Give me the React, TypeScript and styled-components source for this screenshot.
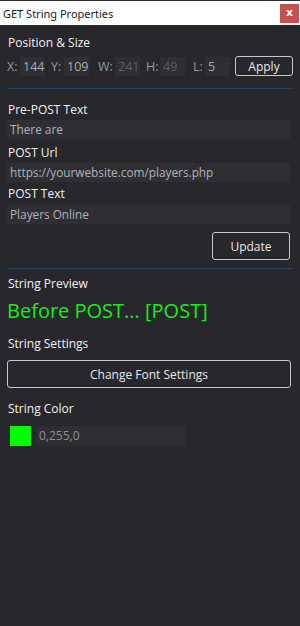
import React from 'react'
import styled, { createGlobalStyle } from 'styled-components'

const Global = createGlobalStyle`
  html, body {
    margin: 0;
    padding: 0;
    background: #27272c;
  }
  body {
    font-family: 'Open Sans', 'Noto Sans', sans-serif;
  }
`

// label width / gap after the input, so the boxes land where the original has them
const coords = [
  { label: 'X:', value: '144', dim: false, lw: 13, gap: 6 },
  { label: 'Y:', value: '109', dim: false, lw: 13, gap: 9 },
  { label: 'W:', value: '241', dim: true, lw: 17, gap: 6 },
  { label: 'H:', value: '49', dim: true, lw: 14, gap: 8 },
  { label: 'L:', value: '5', dim: false, lw: 12, gap: 5 },
]

const App = () => {
  return (
    <Window>
      <Global />
      <TitleBar>
        <Title>GET String Properties</Title>
        <Close>x</Close>
      </TitleBar>
      <Body>
        <Label $top={8}>Position &amp; Size</Label>
        <CoordRow>
          {coords.map((c) => (
            <Coord key={c.label} $gap={c.gap}>
              <CoordLabel $w={c.lw}>{c.label}</CoordLabel>
              <CoordInput $dim={c.dim}>{c.value}</CoordInput>
            </Coord>
          ))}
          <Button $w="58px" $h="20px">Apply</Button>
        </CoordRow>
        <Divider $top={12} />

        <Label $top={12}>Pre-POST Text</Label>
        <Field>There are</Field>
        <Label $top={5}>POST Url</Label>
        <Field>https://yourwebsite.com/players.php</Field>
        <Label $top={3} $bottom={2}>POST Text</Label>
        <Field>Players Online</Field>
        <ButtonRow>
          <Button $w="78px" $h="28px">Update</Button>
        </ButtonRow>
        <Divider $top={8} />

        <Label $top={6}>String Preview</Label>
        <Preview>Before POST... [POST]</Preview>
        <Label $top={10}>String Settings</Label>
        <Button $w="284px" $h="28px" $top={6}>Change Font Settings</Button>
        <Label $top={12}>String Color</Label>
        <ColorRow>
          <Swatch $color="#00ff00" />
          <ColorInput>0,255,0</ColorInput>
        </ColorRow>
      </Body>
    </Window>
  )
}

export default App

const Window = styled.div`
  width: 300px;
  height: 626px;
  background: #27272c;
  display: flex;
  flex-direction: column;
  overflow: hidden;
`

const TitleBar = styled.div`
  height: 24px;
  border-top: 1px solid #2b2b2e;
  border-bottom: 1px solid #2b2b2e;
  background: #ffffff;
  display: flex;
  align-items: center;
  justify-content: space-between;
  padding: 0 1px 0 3px;
`

const Title = styled.div`
  font-family: 'Noto Sans', 'Open Sans', sans-serif;
  font-size: 11px;
  color: #1a1a1a;
`

const Close = styled.div`
  width: 19px;
  height: 19px;
  background: #c75050;
  color: #ffffff;
  font-family: 'DejaVu Sans', sans-serif;
  font-weight: 700;
  font-size: 11px;
  line-height: 17px;
  text-align: center;
`

const Body = styled.div`
  display: flex;
  flex-direction: column;
  align-items: flex-start;
  padding: 0 7px;
`

const Label = styled.div<{ $top: number; $bottom?: number }>`
  font-size: 12px;
  color: #f2f2f2;
  line-height: 18px;
  margin-top: ${(p) => p.$top}px;
  margin-bottom: ${(p) => p.$bottom ?? 1}px;
  padding-left: 1px;
`

const CoordRow = styled.div`
  display: flex;
  align-items: center;
  margin-top: 3px;
`

const Coord = styled.div<{ $gap: number }>`
  display: flex;
  align-items: center;
  margin-right: ${(p) => p.$gap}px;
`

const CoordLabel = styled.div<{ $w: number }>`
  font-size: 12.5px;
  color: #9a9a9a;
  width: ${(p) => p.$w}px;
`

const CoordInput = styled.div<{ $dim: boolean }>`
  width: 25px;
  height: 19px;
  background: #2e2e33;
  color: ${(p) => (p.$dim ? '#5f5f64' : '#a3acb8')};
  font-size: 12.5px;
  line-height: 19px;
  padding-left: 3px;
  box-sizing: border-box;
`

const Button = styled.div<{ $w: string; $h: string; $top?: number }>`
  width: ${(p) => p.$w};
  height: ${(p) => p.$h};
  margin-top: ${(p) => p.$top ?? 0}px;
  box-sizing: border-box;
  border: 1px solid #c8c8c8;
  border-radius: 3px;
  color: #e8e8e8;
  font-size: 12px;
  display: flex;
  align-items: center;
  justify-content: center;
`

const Divider = styled.div<{ $top: number }>`
  align-self: stretch;
  height: 1px;
  background: #1b4a6b;
  margin-top: ${(p) => p.$top}px;
`

const Field = styled.div`
  height: 19px;
  width: 283px;
  background: #2e2e33;
  color: #b0b4ba;
  font-size: 11.8px;
  line-height: 19px;
  padding-left: 3px;
  box-sizing: border-box;
`

const ButtonRow = styled.div`
  display: flex;
  justify-content: flex-end;
  width: 283px;
  margin-top: 8px;
`

const Preview = styled.div`
  font-size: 20px;
  color: #18ec18;
  line-height: 28px;
  margin-top: 3px;
`

const ColorRow = styled.div`
  display: flex;
  align-items: center;
  gap: 6px;
  padding-left: 3px;
  margin-top: 7px;
`

const Swatch = styled.div<{ $color: string }>`
  width: 21px;
  height: 20px;
  background: ${(p) => p.$color};
`

const ColorInput = styled.div`
  width: 148px;
  height: 20px;
  background: #2e2e33;
  color: #8e8e8e;
  font-size: 12px;
  line-height: 20px;
  padding-left: 2px;
  box-sizing: border-box;
`
